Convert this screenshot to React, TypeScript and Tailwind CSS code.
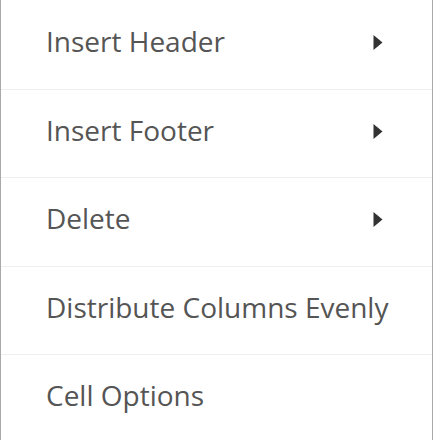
const items = [
  { label: "Insert Header", sub: true },
  { label: "Insert Footer", sub: true },
  { label: "Delete", sub: true },
  { label: "Distribute Columns Evenly", sub: false },
  { label: "Cell Options", sub: false },
];

export default function App() {
  return (
    <div className="w-[435px] h-[440px] bg-white overflow-hidden">
      <div
        className="w-[433px] border-l border-r border-[#a9a9a9] bg-white text-[#555555]"
        style={{ fontFamily: '"Open Sans", sans-serif' }}
      >
        {items.map((item, i) => (
          <div
            key={item.label}
            className={
              "flex items-center justify-between h-[88.5px] pl-[45px] pr-[49px] pb-[7px] text-[28px] leading-none whitespace-nowrap " +
              (i > 0 ? "border-t border-[#eeeeee]" : "")
            }
          >
            <span>{item.label}</span>
            {item.sub && (
              <svg width="10" height="15" viewBox="0 0 10 15" className="text-[#333] shrink-0 mt-[3px]">
                <path d="M0.5 0 L9.5 7.5 L0.5 15 Z" fill="currentColor" />
              </svg>
            )}
          </div>
        ))}
      </div>
    </div>
  );
}
